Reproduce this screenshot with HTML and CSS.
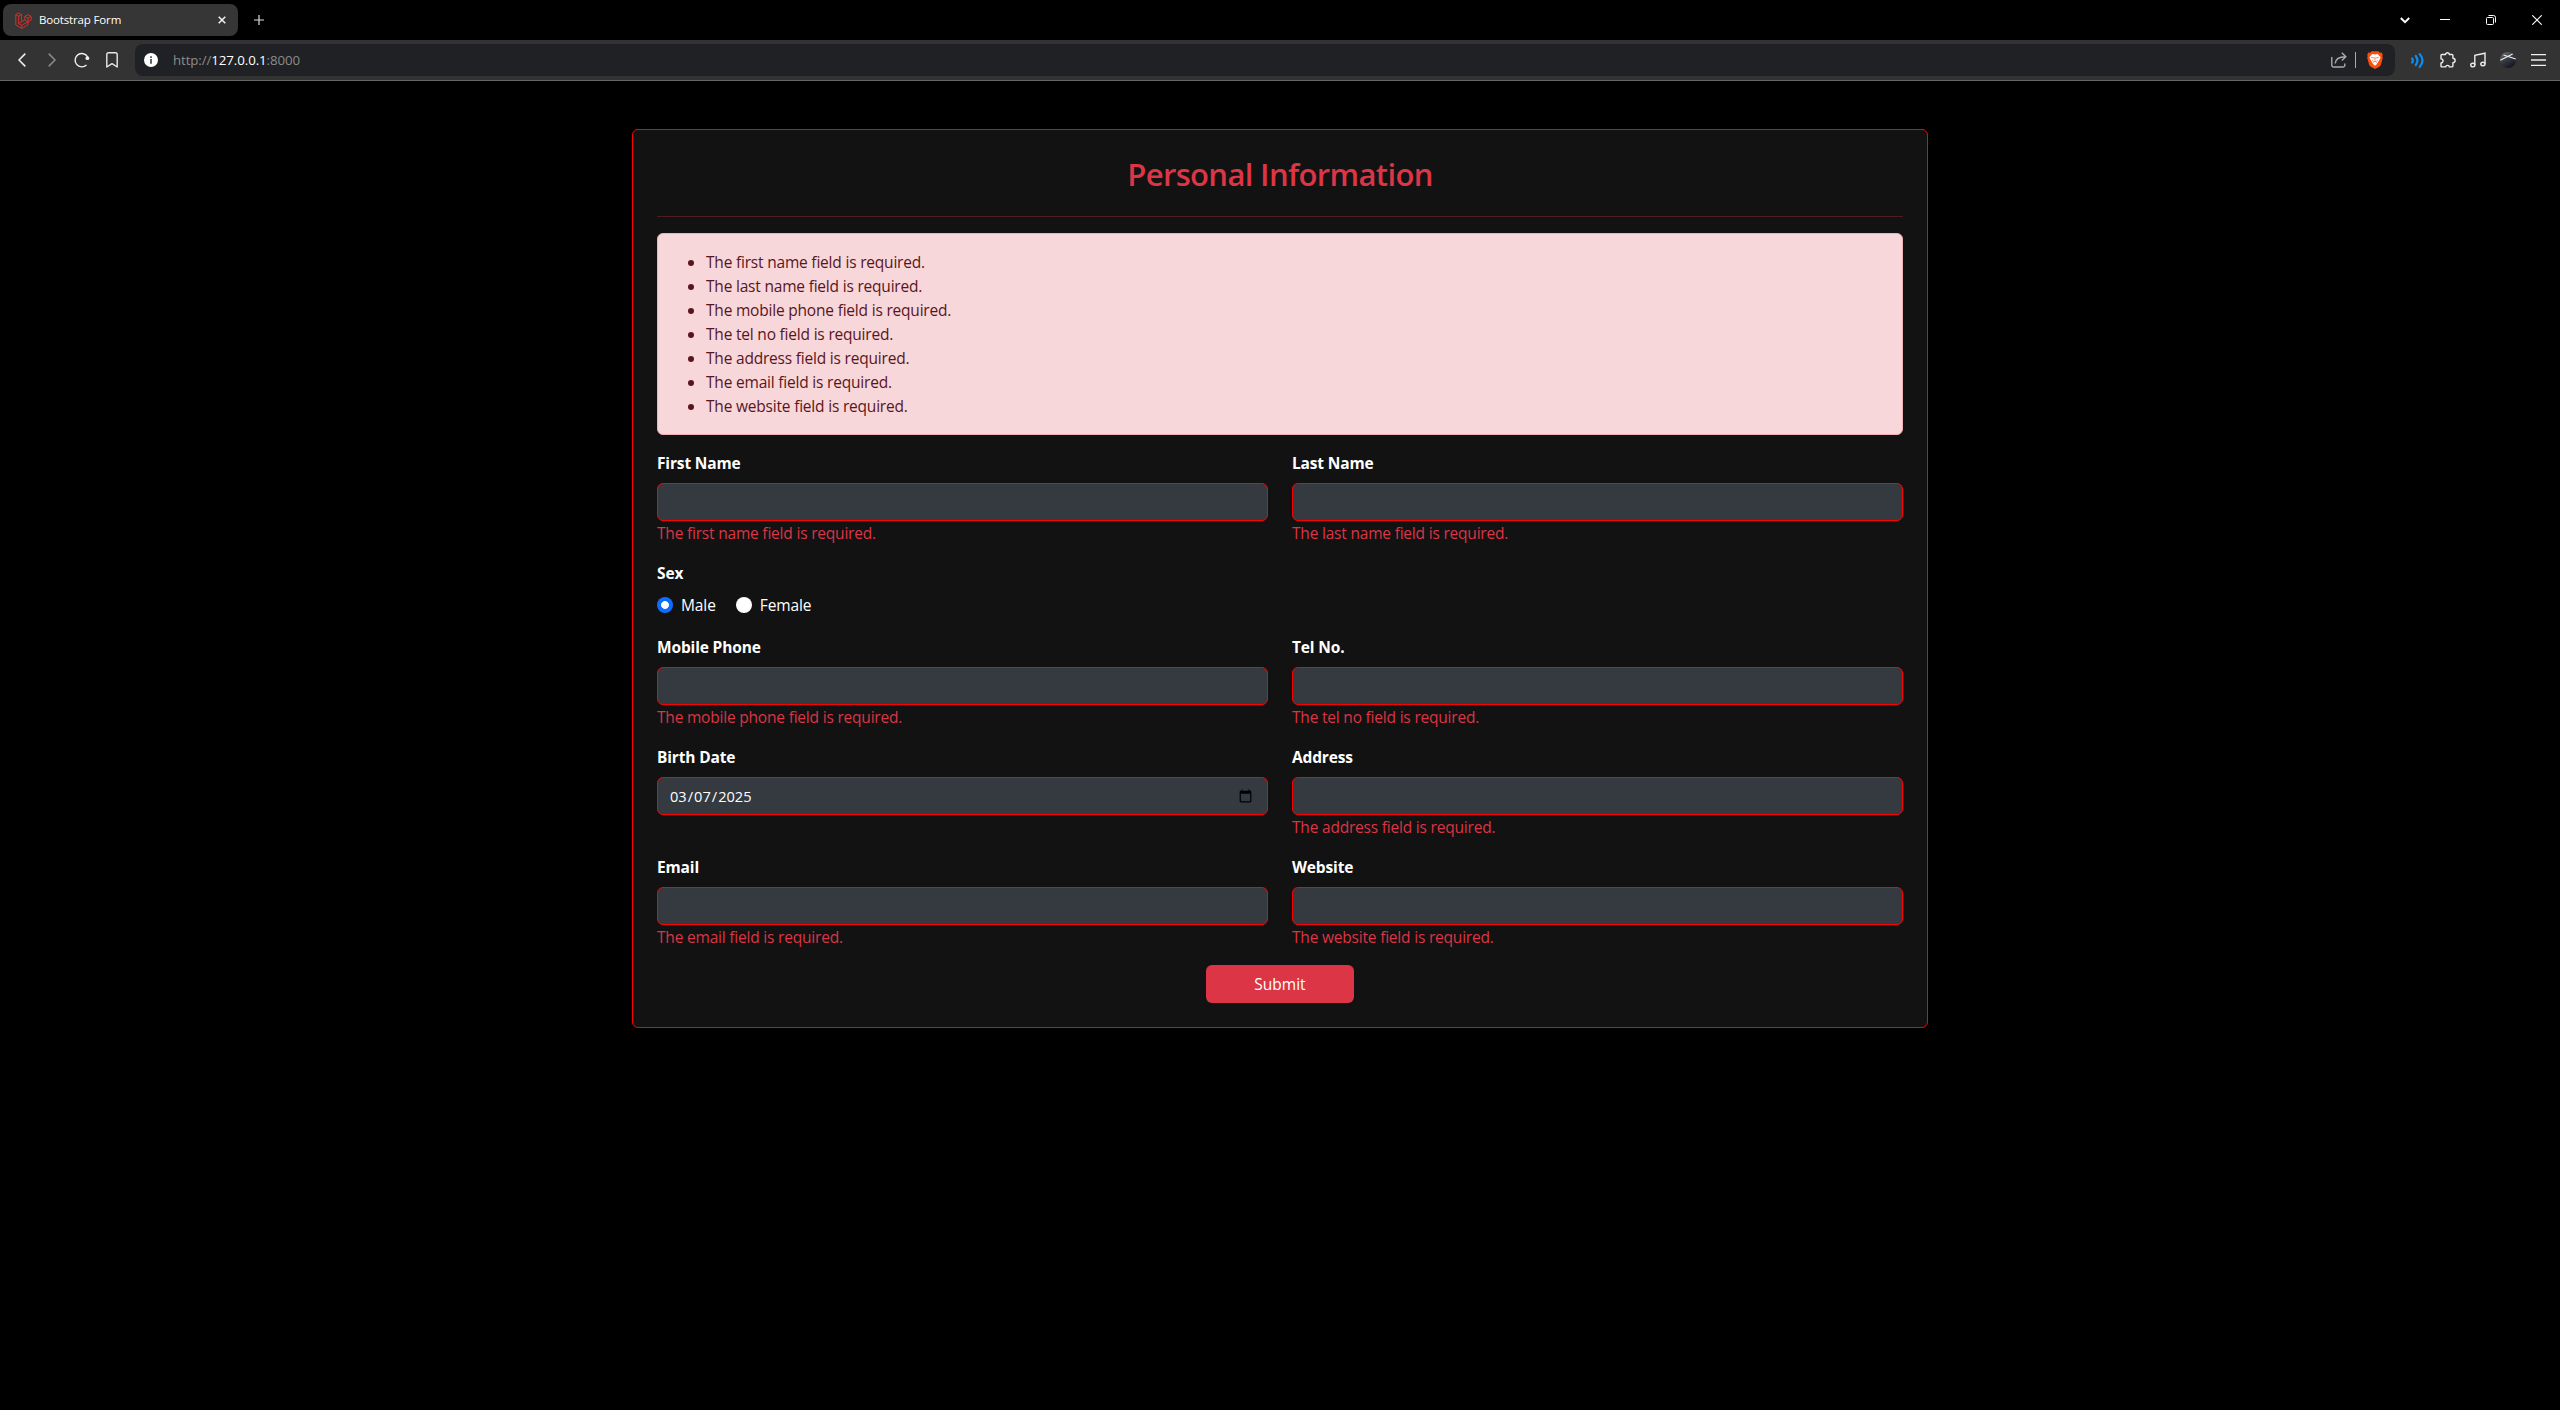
FILE: index.html
```
<!DOCTYPE html>
<html lang="en">
<head>
<meta charset="utf-8">
<title>Bootstrap Form</title>
<link rel="stylesheet" href="styles.css">
</head>
<body>
<header class="browser">
  <div class="tabstrip">
    <div class="tab">
      <svg class="favicon" width="17" height="17" viewBox="0 0 17 17" fill="none" stroke="#d32f28" stroke-width="1"><path d="M.8 2.6 3.7 1l2.9 1.6v7.1l3.2-1.8V4.4l3.2-1.8 3.2 1.8v3.7L13 9.9v3L6.6 16.4.8 13zM.8 2.6l2.9 1.6 2.9-1.6M3.7 4.2v7.5l2.9 1.6 6.4-3.4M9.8 4.4 13 6.2l3.2-1.8M13 6.2v3.7M9.8 7.9 13 9.9M3.7 11.7l2.9-2M6.6 13.3v3.1"/></svg>
      <span class="tab-title">Bootstrap Form</span>
      <svg class="tab-close" width="8" height="8" viewBox="0 0 8 8" stroke="#f2f2f2" stroke-width="1.5"><path d="M.7.7l6.6 6.6M7.3.7.7 7.3"/></svg>
    </div>
    <svg class="new-tab" width="10" height="10" viewBox="0 0 10 10" stroke="#ddd" stroke-width="1.2"><path d="M5 0v10M0 5h10"/></svg>
    <div class="window-buttons">
      <svg width="10" height="7" viewBox="0 0 10 7" fill="none" stroke="#fff" stroke-width="1.9"><path d="M.8 1 5 5.2 9.2 1"/></svg>
      <svg width="10" height="10" viewBox="0 0 10 10" stroke="#fff"><path d="M0 4.5h10"/></svg>
      <svg width="10" height="10" viewBox="0 0 10 10" fill="none" stroke="#fff"><rect x=".5" y="2.5" width="7" height="7" rx="1"/><path d="M2.5.5h5a2 2 0 0 1 2 2v5"/></svg>
      <svg width="10" height="10" viewBox="0 0 10 10" stroke="#fff" stroke-width="1.1"><path d="M.3.3l9.4 9.4M9.7.3.3 9.7"/></svg>
    </div>
  </div>
  <div class="toolbar">
    <div class="nav">
      <svg width="8" height="14" viewBox="0 0 8 14" fill="none" stroke="#f0f0f0" stroke-width="1.5"><path d="M7.3.6 1 7l6.3 6.4"/></svg>
      <svg width="8" height="14" viewBox="0 0 8 14" fill="none" stroke="#8a8a8a" stroke-width="1.5"><path d="M.7.6 7 7 .7 13.4"/></svg>
      <svg class="reload" width="16" height="16" viewBox="0 0 16 16" fill="none" stroke="#f0f0f0" stroke-width="1.4"><path d="M12.5 13A6.7 6.7 0 1 1 13.7 5"/><circle cx="13.4" cy="6.2" r="1.9" fill="#f0f0f0" stroke="none"/></svg>
      <svg width="12" height="16" viewBox="0 0 12 16" fill="none" stroke="#e8e8e8" stroke-width="1.4" stroke-linejoin="round"><path d="M.8 2.3A1.5 1.5 0 0 1 2.3.8h7.4a1.5 1.5 0 0 1 1.5 1.5V15L6 11.7.8 15z"/></svg>
    </div>
    <div class="address">
      <svg class="info" width="14" height="14" viewBox="0 0 14 14"><circle cx="7" cy="7" r="7" fill="#fff"/><path d="M7 3.2v1.7M7 6v4.8" stroke="#3a3a3a" stroke-width="1.6"/></svg>
      <span class="url">http://<b>127.0.0.1</b>:8000</span>
      <svg class="share" width="16" height="16" viewBox="0 0 16 16" fill="none" stroke="#aaa" stroke-width="1.4"><path d="M.8 5v8.2a1.8 1.8 0 0 0 1.8 1.8H12a1.8 1.8 0 0 0 1.8-1.8V11.5M4.2 11.5C4.5 7 8 4.7 14.5 4.7M10.8.8l4 3.9-4 3.9"/></svg>
      <span class="divider"></span>
      <svg class="brave" width="16" height="18" viewBox="0 0 16 18"><path d="M4.5.2h7l1.4 1.5 1.7-.1 1.2 2.2-.5 1.3.5 1.6-2 7.2-1.4 1.9L8 18l-4.4-2.2-1.4-1.9-2-7.2.5-1.6-.5-1.3 1.2-2.2 1.7.1z" fill="#fb4f0c"/><path d="M5.3 3 8 3.6l2.7-.6 2.7 3-.3 1.8-2 3.2L10 13l-2 1.8L6 13l-1.1-2-2-3.2L2.6 6z" fill="#fff"/><path d="M4.2 6.3 7 7M11.8 6.3 9 7M8 6v3.6M6 11.5l2-1.3 2 1.3M5.2 9l1.2 1.2M10.8 9 9.6 10.2" stroke="#fb4f0c" stroke-width=".7" fill="none"/></svg>
    </div>
    <div class="extensions">
      <svg width="13" height="15" viewBox="0 0 13 15" fill="none" stroke="#0b8df5" stroke-width="2.2" stroke-linecap="round"><path d="M1.1 5.5q1.6 2 0 4M4.8 3q3.3 4.5 0 9M8.7 1.1q5.6 6.4 0 12.8"/></svg>
      <svg class="puzzle" width="16" height="16" viewBox="0 0 16 16" fill="none" stroke="#ececec" stroke-width="1.4" stroke-linejoin="round"><path d="M1 3.5q0-1 1-1h3.6c-.3-2.3 4-2.3 3.7 0h2.6q1 0 1 1v2.7c3 .2 3 4.2 0 4.4v3.3q0 1-1 1H9.3c.2-2-3.7-2-3.5 0H2q-1 0-1-1v-3c2.7.1 2.7-4.2 0-4z"/></svg>
      <svg width="16" height="16" viewBox="0 0 16 16" fill="none" stroke="#ececec" stroke-width="1.4"><path d="M4.8 13V3.3L15 1.2v10.6"/><ellipse cx="2.8" cy="13.1" rx="2.1" ry="1.8"/><ellipse cx="12.9" cy="12" rx="2.1" ry="1.8"/></svg>
      <svg width="16" height="16" viewBox="0 0 16 16"><defs><linearGradient id="globe" x1="0" y1="0" x2=".6" y2="1"><stop offset="0" stop-color="#76777f"/><stop offset=".45" stop-color="#3d414b"/><stop offset="1" stop-color="#14171d"/></linearGradient></defs><circle cx="8" cy="8" r="8" fill="url(#globe)"/><path d="M.3 8.2 12.6 2M3.5 3 15.8 7" stroke="#eee" stroke-width="1.1"/></svg>
      <svg width="15" height="12" viewBox="0 0 15 12" stroke="#f0f0f0" stroke-width="1.3"><path d="M0 .7h15M0 6h15M0 11.3h15"/></svg>
    </div>
  </div>
</header>
<main class="card">
  <h1>Personal Information</h1>
  <hr>
  <div class="alert">
    <ul>
      <li>The first name field is required.</li>
      <li>The last name field is required.</li>
      <li>The mobile phone field is required.</li>
      <li>The tel no field is required.</li>
      <li>The address field is required.</li>
      <li>The email field is required.</li>
      <li>The website field is required.</li>
    </ul>
  </div>
  <form class="fields">
    <div class="field"><label for="first">First Name</label><input id="first" type="text"><span class="error">The first name field is required.</span></div>
    <div class="field"><label for="last">Last Name</label><input id="last" type="text"><span class="error">The last name field is required.</span></div>
    <div class="field wide">
      <label>Sex</label>
      <div class="choices">
        <label class="choice"><input type="radio" name="sex" checked>Male</label>
        <label class="choice"><input type="radio" name="sex">Female</label>
      </div>
    </div>
    <div class="field"><label for="mobile">Mobile Phone</label><input id="mobile" type="text"><span class="error">The mobile phone field is required.</span></div>
    <div class="field"><label for="tel">Tel No.</label><input id="tel" type="text"><span class="error">The tel no field is required.</span></div>
    <div class="field"><label for="birth">Birth Date</label><input id="birth" type="date" value="2025-03-07"></div>
    <div class="field"><label for="address">Address</label><input id="address" type="text"><span class="error">The address field is required.</span></div>
    <div class="field"><label for="email">Email</label><input id="email" type="text"><span class="error">The email field is required.</span></div>
    <div class="field"><label for="website">Website</label><input id="website" type="text"><span class="error">The website field is required.</span></div>
    <button class="submit" type="button">Submit</button>
  </form>
</main>
</body>
</html>
```
FILE: styles.css
```
* { box-sizing: border-box; }

body {
  margin: 0;
  min-height: 100vh;
  background: #000;
  color: #fff;
  font: 15.5px/24px "Open Sans", "Noto Sans", sans-serif;
  letter-spacing: -0.2px;
}

svg { display: block; flex: none; }

/* Browser window */
.tabstrip {
  display: flex;
  align-items: center;
  height: 40px;
  padding-left: 3px;
}
.tab {
  display: flex;
  align-items: center;
  width: 235px;
  height: 32px;
  padding: 0 12px;
  border-radius: 8px;
  background: #363636;
}
.tab-title {
  margin-left: 7px;
  font-size: 11.5px;
  letter-spacing: -0.15px;
}
.tab-close { margin-left: auto; }
.new-tab { margin-left: 16px; }
.window-buttons {
  display: flex;
  align-items: center;
  gap: 36px;
  margin-left: auto;
  padding-right: 18px;
}
.window-buttons svg:first-child { margin-right: -6px; }

.toolbar {
  display: flex;
  align-items: center;
  height: 41px;
  border-bottom: 1px solid #666;
  background: #333;
}
.nav {
  display: flex;
  align-items: center;
  gap: 22px;
  width: 135px;
  padding-left: 18px;
}
.nav .reload { margin: 0 -6px 0 -4px; }
.address {
  display: flex;
  align-items: center;
  flex: 1;
  height: 32px;
  padding: 0 12px 0 9px;
  border-radius: 8px;
  background: #202124;
}
.url {
  margin-left: 15px;
  color: #8b8b8b;
  font-size: 13.3px;
  letter-spacing: -0.1px;
}
.url b { color: #fff; font-weight: 400; }
.share { margin-left: auto; }
.divider {
  width: 1px;
  height: 16px;
  margin: 0 11px 0 8px;
  background: #aaa;
}
.extensions {
  display: flex;
  align-items: center;
  justify-content: space-between;
  width: 165px;
  padding: 0 14px 0 16px;
}
.extensions .puzzle { margin: 0 -1px 0 1px; }

/* Form card */
.card {
  width: 1296px;
  margin: 48px auto 0;
  padding: 24px;
  border: 1px solid #f00;
  border-radius: 6px;
  background: #121212;
}
h1 {
  margin: 0;
  padding-top: 3px;
  color: #dc3545;
  font-size: 31px;
  font-weight: 600;
  line-height: 35.4px;
  letter-spacing: -0.65px;
  text-align: center;
}
hr {
  margin: 24px 0 16px;
  border: 0;
  border-top: 1px solid #dc3545;
  opacity: 0.3;
}
.alert {
  padding: 16px;
  border: 1px solid #f1aeb5;
  border-radius: 6px;
  background: #f8d7da;
  color: #58151c;
}
.alert ul { margin: 0; padding-left: 32px; }

.fields {
  display: grid;
  grid-template-columns: 1fr 1fr;
  gap: 16px 24px;
  margin-top: 16px;
}
.field { display: flex; flex-direction: column; }
.wide { grid-column: 1 / -1; }
.field > label {
  margin-bottom: 8px;
  font-size: 15.5px;
  font-weight: 700;
  letter-spacing: -0.15px;
}
.field > input {
  width: 100%;
  height: 38px;
  padding: 6px 12px;
  border: 1px solid #f00;
  border-radius: 6px;
  background: #343a40;
  color: #fff;
  font: inherit;
  letter-spacing: 0;
}
.field > input[type="date"] {
  padding-left: 11px;
  font-size: 14.6px;
}
.error { color: #dc3545; }

.choices { display: flex; gap: 20px; height: 26px; }
.choice {
  display: flex;
  align-items: flex-start;
  gap: 8px;
  letter-spacing: -0.1px;
}
.choice input {
  width: 16px;
  height: 16px;
  margin: 4px 0 0;
  border: 0;
  border-radius: 50%;
  background: #fff;
  appearance: none;
}
.choice input:checked {
  background: radial-gradient(circle, #fff 3.5px, #0d6efd 4.3px);
}

.submit {
  grid-column: 1 / -1;
  justify-self: center;
  width: 148px;
  height: 38px;
  border: 0;
  border-radius: 6px;
  background: #dc3545;
  color: #fff;
  font: inherit;
}
```
